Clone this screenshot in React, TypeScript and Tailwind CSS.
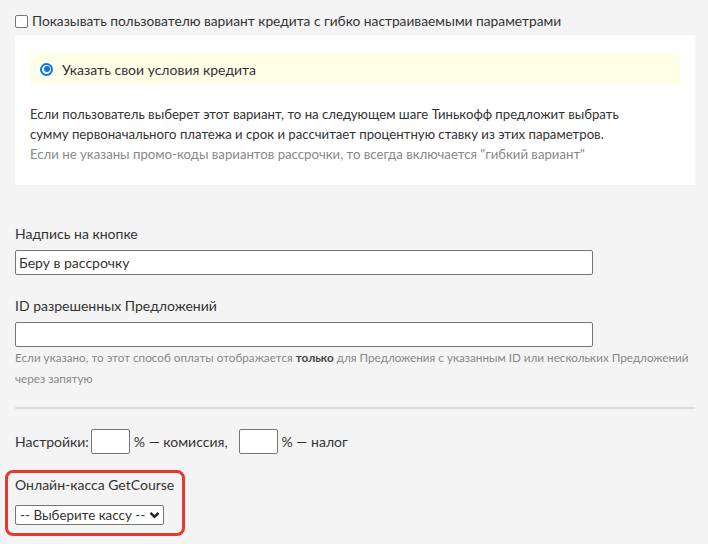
import React from "react";

export default function App() {
  const font = { fontFamily: "Lato, 'Open Sans', sans-serif" };
  return (
    <div
      className="min-h-[544px] w-[708px] bg-[#f4f4f4] pl-[15px] pr-[13px] pt-[11px] text-[14px] text-[#333]"
      style={font}
    >
      <label className="flex h-[20px] items-center">
        <span className="mr-[4px] inline-block h-[13px] w-[13px] rounded-[2px] border border-[#767676] bg-white" />
        <span className="text-[13.75px] leading-[20px]">
          Показывать пользователю вариант кредита с гибко настраиваемыми параметрами
        </span>
      </label>

      <div className="mt-[4px] bg-white px-[15px] pb-[21px] pt-[18px]">
        <div className="flex h-[32px] items-center bg-[#fffee6] pl-[10px]">
          <span className="mr-[9px] flex h-[13px] w-[13px] items-center justify-center rounded-full border-2 border-[#0b72e7] bg-white">
            <span className="h-[6px] w-[6px] rounded-full bg-[#0b72e7]" />
          </span>
          <span className="text-[14px]">Указать свои условия кредита</span>
        </div>
        <div className="mt-[19px] text-[13.2px] leading-[20px]">
          <div>
            Если пользователь выберет этот вариант, то на следующем шаге Тинькофф предложит выбрать
            <br />
            сумму первоначального платежа и срок и рассчитает процентную ставку из этих параметров.
          </div>
          <div className="text-[#888]">
            Если не указаны промо-коды вариантов рассрочки, то всегда включается "гибкий вариант"
          </div>
        </div>
      </div>

      <div className="mt-[39px] leading-[20px]">Надпись на кнопке</div>
      <div className="mt-[6px] flex h-[25px] w-[578px] items-center rounded-[2px] border border-[#767676] bg-white px-[3px]">
        Беру в рассрочку
      </div>

      <div className="mt-[21px] leading-[20px]">ID разрешенных Предложений</div>
      <div className="mt-[6px] h-[25px] w-[578px] rounded-[2px] border border-[#767676] bg-white" />
      <div className="text-[11.7px] leading-[21px] text-[#888]">
        Если указано, то этот способ оплаты отображается <b className="text-[#444]">только</b> для
        Предложения с указанным ID или нескольких Предложений
        <br />
        через запятую
      </div>

      <div className="mt-[18px] h-[2px] bg-[#dddddd]" />

      <div className="mt-[20px] flex h-[25px] items-center">
        <span>Настройки:</span>
        <span className="ml-[2px] h-[25px] w-[39px] rounded-[2px] border border-[#767676] bg-white" />
        <span className="ml-[4px]">% — комиссия,</span>
        <span className="ml-[11px] h-[25px] w-[39px] rounded-[2px] border border-[#767676] bg-white" />
        <span className="ml-[4px]">% — налог</span>
      </div>

      <div className="relative mt-[16px] pb-[10px] pt-[5px]">
        <div className="pointer-events-none absolute left-[-10px] top-0 h-[66px] w-[180px] rounded-[8px] border-[3px] border-[#e53a2f]" />
        <div className="leading-[20px]">Онлайн-касса GetCourse</div>
        <div className="mt-[10px] flex h-[20px] w-[149px] items-center justify-between rounded-[2px] border border-[#767676] bg-white pl-[4px] pr-[3px]">
          <span className="whitespace-nowrap text-[13.4px] leading-[18px]">-- Выберите кассу --</span>
          <svg width="11" height="8" viewBox="0 0 11 8" className="shrink-0">
            <path d="M1.5 1.8 L5.5 5.8 L9.5 1.8" fill="none" stroke="#222" strokeWidth="2.4" />
          </svg>
        </div>
      </div>
    </div>
  );
}
